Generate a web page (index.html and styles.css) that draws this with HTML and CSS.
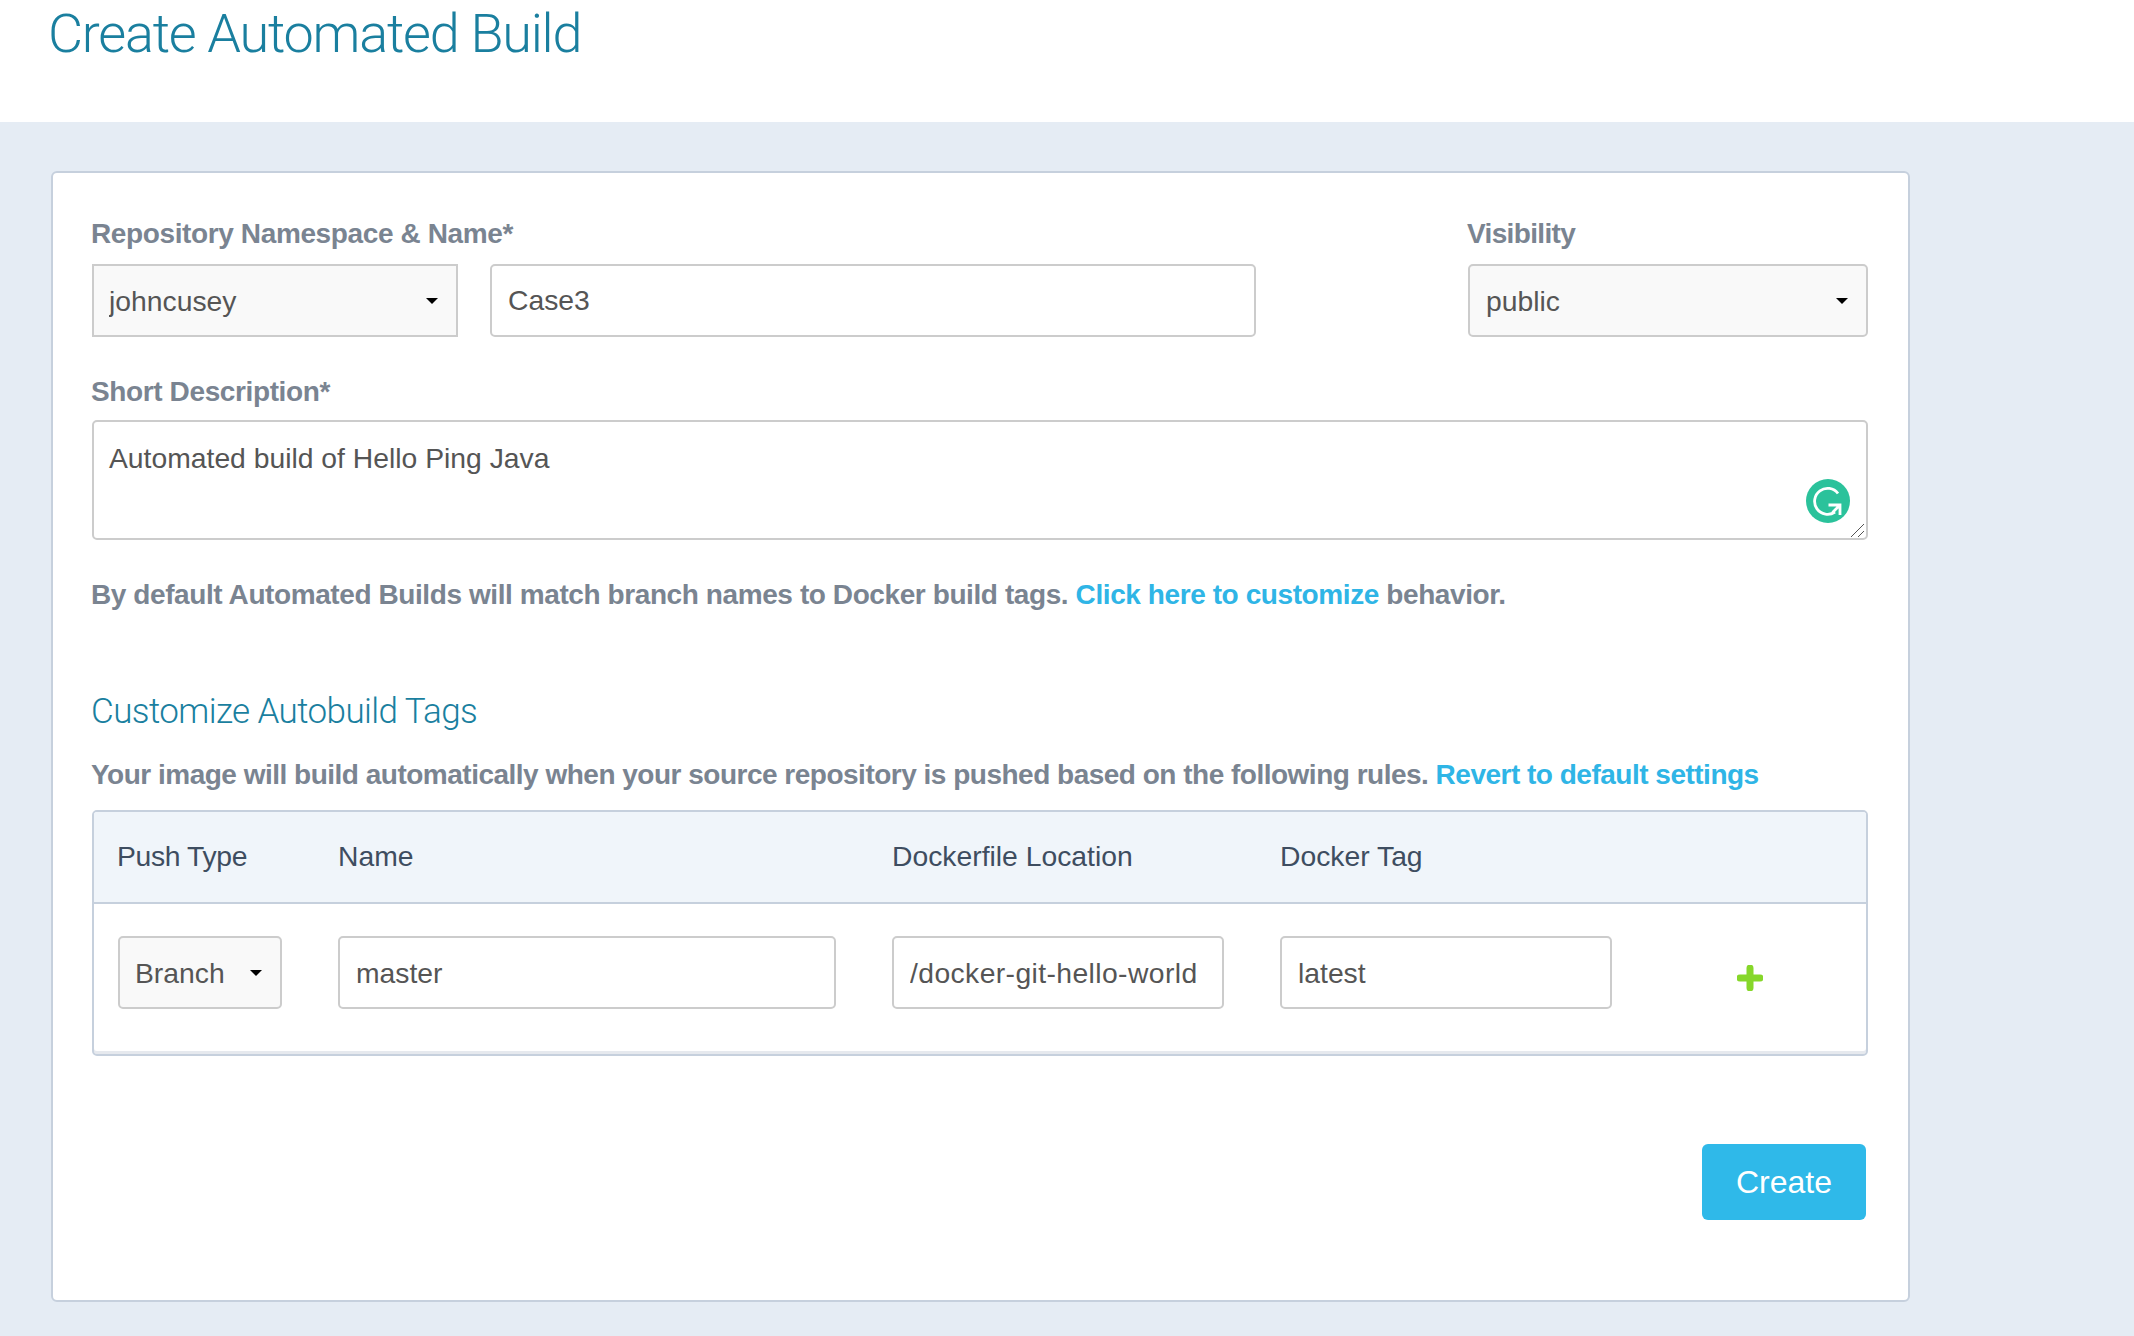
FILE: index.html
```html
<!DOCTYPE html>
<html lang="en">
<head>
<meta charset="utf-8">
<title>Create Automated Build</title>
<link rel="stylesheet" href="styles.css">
</head>
<body>
<header class="page-head">
  <h1 class="page-title">Create Automated Build</h1>
</header>
<main class="page-main">
  <form class="card">
    <div class="repo-row">
      <div class="repo-field">
        <label class="field-label">Repository Namespace &amp; Name*</label>
        <div class="repo-inputs">
          <div class="select-wrap select-ns">
            <select class="select select-square"><option>johncusey</option></select>
          </div>
          <input class="input input-name" type="text" value="Case3">
        </div>
      </div>
      <div class="vis-field">
        <label class="field-label label-vis">Visibility</label>
        <div class="select-wrap select-vis">
          <select class="select"><option>public</option></select>
        </div>
      </div>
    </div>
    <label class="field-label label-desc">Short Description*</label>
    <div class="desc-wrap">
      <textarea class="input desc">Automated build of Hello Ping Java</textarea>
      <svg class="grammarly" width="44" height="44" viewBox="0 0 44 44" aria-hidden="true">
        <circle cx="22" cy="22" r="22" fill="#2bc29b"/>
        <path d="M32 14.5A13 13 0 1 0 29 33" fill="none" stroke="#fff" stroke-width="2.8"/>
        <path d="M22.5 26H34V36M34 26l-7.5 7.5" fill="none" stroke="#fff" stroke-width="2.8"/>
      </svg>
      <svg class="resizer" width="15" height="15" viewBox="0 0 15 15" aria-hidden="true">
        <path d="M14 1L1 14M14 8L8 14" stroke="#555" stroke-width="1" fill="none"/>
      </svg>
    </div>
    <p class="hint hint-default">By default Automated Builds will match branch names to Docker build tags. <a class="link" href="#">Click here to customize</a> behavior.</p>
    <h2 class="section-title">Customize Autobuild Tags</h2>
    <p class="hint hint-rules">Your image will build automatically when your source repository is pushed based on the following rules. <a class="link" href="#">Revert to default settings</a></p>
    <div class="tags">
      <div class="tags-row tags-head">
        <div class="col-push">Push Type</div>
        <div>Name</div>
        <div>Dockerfile Location</div>
        <div>Docker Tag</div>
        <div></div>
      </div>
      <div class="tags-row tags-body">
        <div class="select-wrap select-branch">
          <select class="select"><option>Branch</option></select>
        </div>
        <input class="input input-cell" type="text" value="master">
        <input class="input input-cell input-path" type="text" value="/docker-git-hello-world">
        <input class="input input-cell" type="text" value="latest">
        <svg class="plus" width="26" height="26" viewBox="0 0 26 26" aria-hidden="true">
          <path d="M13 3v20M3 13h20" stroke="#86d72a" stroke-width="7" stroke-linecap="round" fill="none"/>
        </svg>
      </div>
    </div>
    <div class="actions">
      <button class="btn-create" type="button">Create</button>
    </div>
  </form>
</main>
</body>
</html>
```

FILE: styles.css
```css
* { box-sizing: border-box; }
html, body { margin: 0; padding: 0; }
body {
  height: 1336px;
  overflow: hidden;
  background: #e5ecf4;
  font-family: "Liberation Sans", Arial, sans-serif;
  font-size: 28.3px;
  color: #555;
}
.page-head {
  height: 122px;
  background: #fff;
  padding: 0 0 0 48px;
}
.page-title {
  margin: 0;
  padding-top: 2px;
  font-family: Roboto, "Liberation Sans", sans-serif;
  font-weight: 300;
  font-size: 54px;
  line-height: 64px;
  color: #1a7f9f;
  letter-spacing: -1.25px;
}
.page-main {
  padding: 49px 0 0 51px;
}
.card {
  width: 1859px;
  height: 1131px;
  background: #fff;
  border: 2px solid #c6d0dd;
  border-radius: 6px;
  padding: 40px 40px 0 39px;
}
.repo-row {
  display: flex;
  justify-content: space-between;
}
.field-label {
  display: block;
  margin-left: -1px;
  padding-top: 1px;
  font-weight: 700;
  font-size: 28px;
  line-height: 40px;
  color: #7a8491;
  letter-spacing: -0.38px;
}
.label-vis { letter-spacing: -0.65px; }
.repo-inputs {
  display: flex;
  gap: 32px;
  margin-top: 10px;
}
.vis-field .select-wrap { margin-top: 10px; }
.select-wrap {
  position: relative;
  height: 73px;
}
.select-wrap::after {
  content: "";
  position: absolute;
  right: 20px;
  top: 34px;
  border-left: 6px solid transparent;
  border-right: 6px solid transparent;
  border-top: 6px solid #000;
  pointer-events: none;
}
.select {
  appearance: none;
  width: 100%;
  height: 100%;
  border: 2px solid #ccc;
  border-radius: 5px;
  background: #f9f9f9;
  padding: 0 15px;
  font: inherit;
  color: #555;
  outline: none;
}
.select-square { border-radius: 0; }
.select-ns { width: 366px; }
.select-vis { width: 400px; }
.select-vis .select { padding-left: 16px; }
.select-branch { width: 164px; }
.input {
  height: 73px;
  width: 100%;
  border: 2px solid #ccc;
  border-radius: 5px;
  background: #fff;
  padding: 0 16px;
  font: inherit;
  color: #555;
  outline: none;
}
.input-name { width: 766px; }
.input-cell { padding-top: 2px; }
.input-path { letter-spacing: 0.4px; }
.label-desc { margin-top: 34px; }
.desc-wrap {
  position: relative;
  margin-top: 8px;
  height: 120px;
}
.desc {
  display: block;
  height: 120px;
  padding: 19px 15px;
  line-height: 34px;
  resize: none;
}
.grammarly {
  position: absolute;
  right: 18px;
  bottom: 17px;
}
.resizer {
  position: absolute;
  right: 3px;
  bottom: 2px;
}
.hint {
  margin: 0 0 0 -1px;
  font-weight: 700;
  font-size: 28px;
  line-height: 40px;
  color: #7a8491;
}
.hint-default { margin-top: 35px; letter-spacing: -0.41px; }
.link { color: #2fb5e6; text-decoration: none; }
.section-title {
  margin: 77px 0 0 -1px;
  font-family: Roboto, "Liberation Sans", sans-serif;
  font-weight: 300;
  font-size: 35px;
  line-height: 40px;
  color: #1a7f9f;
  letter-spacing: -0.6px;
}
.hint-rules { margin-top: 23px; letter-spacing: -0.5px; }
.tags {
  margin-top: 15px;
  border: 2px solid #c6d0dd;
  border-radius: 5px;
  box-shadow: inset 0 -3px 0 #e6e9ee;
  height: 246px;
}
.tags-row {
  display: grid;
  grid-template-columns: 164px 498px 332px 332px 1fr;
  column-gap: 56px;
  padding-left: 24px;
}
.tags-head {
  height: 92px;
  padding-bottom: 2px;
  align-items: center;
  background: #f0f5fa;
  border-bottom: 2px solid #c6d0dd;
  color: #3e4d60;
  border-radius: 3px 3px 0 0;
}
.col-push {
  margin-left: -1px;
  letter-spacing: -0.35px;
}
.tags-body {
  padding-top: 32px;
  align-items: start;
}
.plus {
  margin-top: 29px;
  margin-left: 69px;
}
.actions {
  display: flex;
  justify-content: flex-end;
  margin-top: 88px;
  padding-right: 2px;
}
.btn-create {
  width: 164px;
  height: 76px;
  border: 0;
  border-radius: 6px;
  background: #2fb9e9;
  color: #fff;
  font: inherit;
  font-size: 32px;
  padding: 0;
}
```
